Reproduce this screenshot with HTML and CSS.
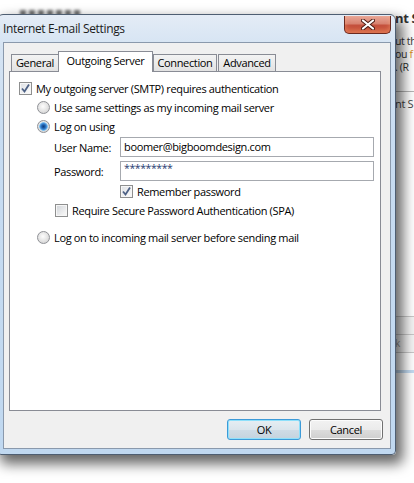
FILE: index.html
```html
<!DOCTYPE html>
<html lang="en">
<head>
  <meta charset="UTF-8" />
  <title>Internet E-mail Settings</title>
  <link rel="stylesheet" href="styles.css">
</head>
<body>
  <div class="desk">
    <div class="ghost"></div>

    <div class="backwin">
      <p class="bw-head">nt S</p>
      <p class="bw-line">ut th</p>
      <p class="bw-line">ou <span class="bw-link">f</span></p>
      <p class="bw-line">. (R</p>
      <div class="bw-bar">nt S</div>
      <div class="bw-list">
        <div class="bw-row"></div>
        <div class="bw-row">k</div>
      </div>
    </div>

    <div class="dialog">
      <div class="titlebar">
        <span class="title">Internet E-mail Settings</span>
        <span class="close">
          <svg width="14" height="11" viewBox="0 0 14 11">
            <path d="M2 1.5 L12 9.5 M12 1.5 L2 9.5" stroke="#4a1a12" stroke-width="4" stroke-linecap="round"/>
            <path d="M2 1.5 L12 9.5 M12 1.5 L2 9.5" stroke="#fff" stroke-width="2.2" stroke-linecap="round"/>
          </svg>
        </span>
      </div>

      <div class="client">
        <div class="tabs">
          <div class="tab t-gen">General</div>
          <div class="tab t-out on">Outgoing Server</div>
          <div class="tab t-con">Connection</div>
          <div class="tab t-adv">Advanced</div>
        </div>

        <div class="panel">
          <label class="row r-auth">
            <span class="cb checked">
              <svg width="11" height="11" viewBox="0 0 11 11"><path d="M2 5.5 L4.5 8.5 L9 1.5" fill="none" stroke="#4d6185" stroke-width="1.8"/></svg>
            </span>
            My outgoing server (SMTP) requires authentication
          </label>
          <label class="row r-opt">
            <span class="rd"></span>
            Use same settings as my incoming mail server
          </label>
          <label class="row r-opt">
            <span class="rd sel"></span>
            Log on using
          </label>

          <div class="field-row r-user">
            <span class="lbl">User Name:</span>
            <div class="field">boomer@bigboomdesign.com</div>
          </div>
          <div class="field-row r-pass">
            <span class="lbl">Password:</span>
            <div class="field pw">*********</div>
          </div>

          <label class="row r-rem">
            <span class="cb checked">
              <svg width="11" height="11" viewBox="0 0 11 11"><path d="M2 5.5 L4.5 8.5 L9 1.5" fill="none" stroke="#4d6185" stroke-width="1.8"/></svg>
            </span>
            Remember password
          </label>
          <label class="row r-spa">
            <span class="cb"></span>
            Require Secure Password Authentication (SPA)
          </label>

          <label class="row r-opt r-last">
            <span class="rd"></span>
            Log on to incoming mail server before sending mail
          </label>
        </div>

        <div class="buttons">
          <button class="btn default">OK</button>
          <button class="btn">Cancel</button>
        </div>
      </div>
    </div>
  </div>
</body>
</html>
```

FILE: styles.css
```css
body {
  margin: 0;
  font-family: "Open Sans", "Segoe UI", sans-serif;
  font-size: 11px;
  letter-spacing: -0.35px;
  color: #000;
  background: #fff;
}

.desk {
  position: relative;
  width: 414px;
  height: 483px;
  overflow: hidden;
  background: #fff;
}

/* blurred heading of the window behind, peeking over the dialog */
.ghost {
  position: absolute;
  left: 20px;
  top: 10px;
  width: 62px;
  height: 6px;
  background: repeating-linear-gradient(90deg, #333 0 6px, transparent 6px 9px);
  filter: blur(1.6px);
  opacity: 0.7;
}

.backwin {
  position: absolute;
  left: 395px;
  top: 0;
  width: 19px;
  height: 370px;
  background: #fff;
  border-bottom: 3px solid #c3dbf2;
  overflow: hidden;
  white-space: nowrap;
}

.backwin p {
  margin: 0;
}

.bw-head {
  margin-top: 10px !important;
  font-size: 13px;
  line-height: 16px;
  font-weight: bold;
  color: #333;
}

.bw-line {
  font-size: 10.5px;
  line-height: 13px;
  height: 13px;
  overflow: hidden;
  color: #333;
}

.bw-head + .bw-line {
  margin-top: 9px !important;
}

.bw-link {
  color: #d98a1a;
}

.bw-bar {
  margin-top: 17px;
  border-top: 1px solid #b5b5b5;
  padding-top: 4px;
  font-size: 11px;
  color: #444;
}

.bw-list {
  margin-top: 205px;
  background: #f4f4f4;
}

.bw-row {
  height: 17px;
  border-top: 1px solid #c8c8c8;
  color: #999;
  font-size: 10px;
  line-height: 17px;
}

.bw-row:last-child {
  border-bottom: 1px solid #c8c8c8;
}

/* the dialog window */
.dialog {
  position: absolute;
  left: -3px;
  top: 14px;
  width: 399px;
  height: 441px;
  box-sizing: border-box;
  padding: 0 4px 5px 5px;
  border: 1px solid #4e5e72;
  border-radius: 6px 6px 4px 4px;
  background: linear-gradient(#e4ecf6, #d6e4f3 30px, #c8dcf1 120px, #c0d8f0);
  box-shadow: 5px 7px 13px 2px rgba(0, 0, 0, 0.6);
  display: flex;
  flex-direction: column;
  z-index: 2;
}

.titlebar {
  flex: none;
  height: 27px;
  display: flex;
  align-items: flex-start;
}

.title {
  line-height: 28px;
  color: #1b1b1b;
  font-size: 12px;
}

.close {
  margin-left: auto;
  margin-top: 1px;
  width: 47px;
  height: 18px;
  box-sizing: border-box;
  border: 1px solid #6b2a20;
  border-top: none;
  border-radius: 0 0 5px 5px;
  background: linear-gradient(#e9a898, #d88270 45%, #c4503c 55%, #c24a33);
  box-shadow: inset 0 -3px 5px rgba(255, 170, 120, 0.5);
  display: flex;
  align-items: center;
  justify-content: center;
}

.client {
  flex: 1;
  background: #f0f0f0;
  border: 1px solid #8a99ac;
  display: flex;
  flex-direction: column;
}

/* tabs */
.tabs {
  display: flex;
  align-items: flex-end;
  height: 20px;
  margin: 8px 0 0 7px;
}

.tab {
  box-sizing: border-box;
  height: 17px;
  border: 1px solid #898c95;
  border-bottom: none;
  background: linear-gradient(#f3f3f3, #ebebeb 50%, #e2e2e2);
  text-align: center;
  line-height: 15px;
}

.tab.on {
  height: 21px;
  margin: 0 0 -1px -1px;
  background: #fff;
  position: relative;
  z-index: 1;
  line-height: 18px;
}

.t-gen { width: 48px; }
.t-out { width: 95px; }
.t-con { width: 64px; }
.t-adv { width: 58px; margin-left: 1px; }

.panel {
  flex: none;
  margin-left: 5px;
  width: 372px;
  height: 340px;
  box-sizing: border-box;
  border: 1px solid #898c95;
  background: #fff;
  display: flex;
  flex-direction: column;
}

.row {
  display: flex;
  align-items: center;
  gap: 4px;
  height: 19px;
}

.r-auth {
  margin-top: 7px;
  padding-left: 9px;
}

.r-opt {
  padding-left: 27px;
}

.r-last {
  margin-top: 9px;
}

.r-rem {
  margin-top: 1px;
  height: 18px;
  padding-left: 110px;
}

.r-spa {
  margin-top: 1px;
  height: 18px;
  padding-left: 45px;
}

/* checkbox + radio */
.cb {
  flex: none;
  width: 13px;
  height: 13px;
  box-sizing: border-box;
  border: 1px solid #8e8f8f;
  background: linear-gradient(135deg, #cfd3d8, #f4f4f4 80%);
  box-shadow: inset 0 0 0 1px #f6f6f6;
  display: flex;
  align-items: center;
  justify-content: center;
}

.cb.checked {
  background: linear-gradient(135deg, #dde0e4, #f7f7f7 80%);
}

.rd {
  flex: none;
  width: 13px;
  height: 13px;
  box-sizing: border-box;
  border-radius: 50%;
  border: 1px solid #8f9196;
  background: radial-gradient(circle at 45% 40%, #fdfdfd, #e2e2e2 55%, #c9c9c9);
}

.rd.sel {
  background:
    radial-gradient(circle at 50% 50%, #0f3f80 0, #1c5aa4 1.5px, #3f8bd6 3px, #7fc0f0 4px, transparent 4.6px),
    radial-gradient(circle at 45% 40%, #fdfdfd, #e2e2e2 55%, #c9c9c9);
}

/* text fields */
.field-row {
  display: flex;
  align-items: center;
  height: 20px;
}

.r-user {
  margin-top: 1px;
}

.r-pass {
  margin-top: 4px;
}

.lbl {
  width: 66px;
  margin-left: 44px;
  flex: none;
}

.field {
  width: 254px;
  height: 20px;
  box-sizing: border-box;
  border: 1px solid #a6a9af;
  padding-left: 3px;
  line-height: 18px;
  background: #fff;
}

.field.pw {
  color: #1f3a70;
  font-size: 10.5px;
  letter-spacing: -0.4px;
  line-height: 13px;
}

/* buttons */
.buttons {
  display: flex;
  justify-content: flex-end;
  gap: 8px;
  margin: 8px 7px 0 0;
}

.btn {
  width: 74px;
  height: 21px;
  box-sizing: border-box;
  border: 1px solid #707070;
  border-radius: 3px;
  background: linear-gradient(#f2f2f2, #ebebeb 50%, #dddddd 51%, #cfcfcf);
  box-shadow: inset 0 0 0 1px #fcfcfc;
  font: inherit;
  letter-spacing: inherit;
  color: #000;
  padding: 0;
}

.btn.default {
  border-color: #3c9ad8;
  background: linear-gradient(#e6eef3, #dbe5ec 50%, #cfdce6 51%, #c4d3de);
  box-shadow: inset 0 0 0 1px #8ee0fb;
}
```
